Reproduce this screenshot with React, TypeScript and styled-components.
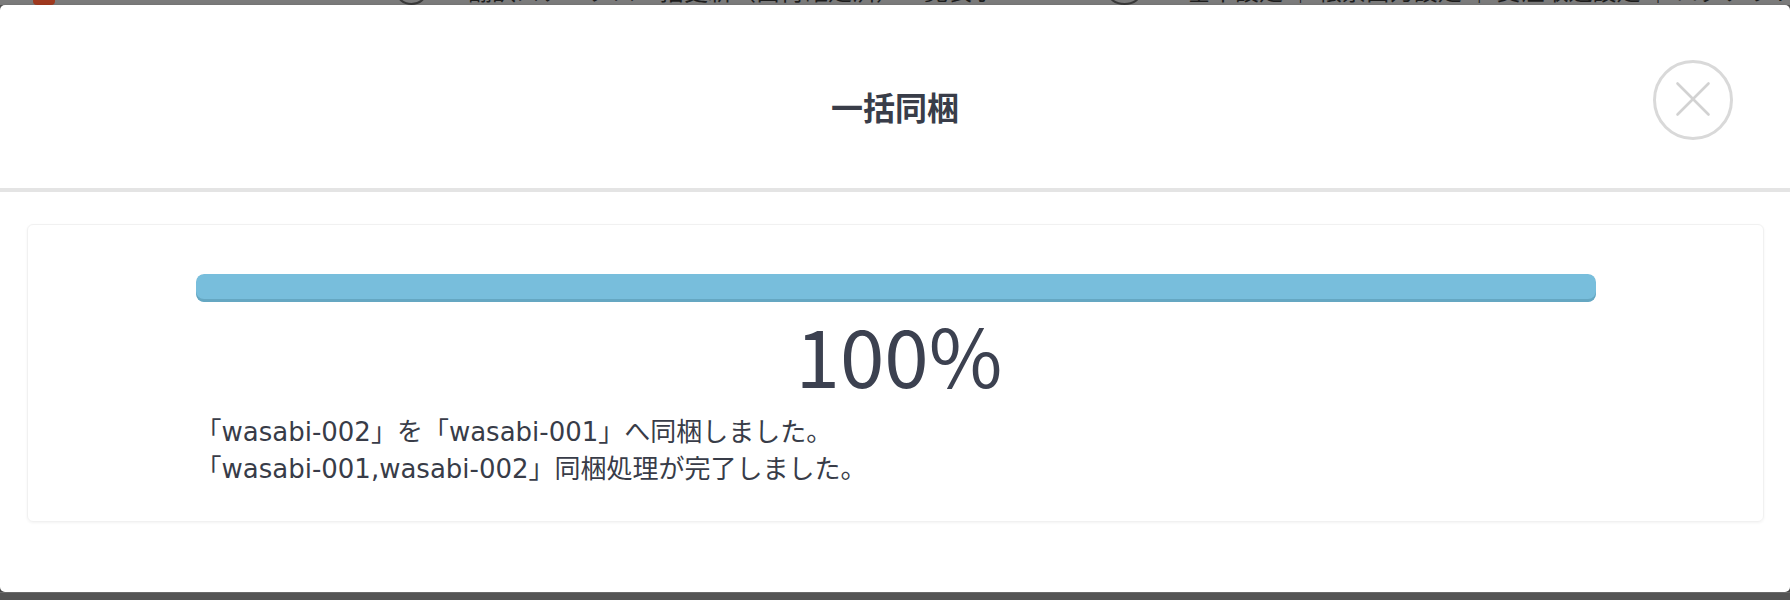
import React from "react";
import styled, { createGlobalStyle } from "styled-components";

const GlobalStyle = createGlobalStyle`
  html, body {
    margin: 0;
    padding: 0;
    background: #545454;
  }
  * { box-sizing: border-box; }
`;

const Page = styled.div`
  width: 1790px;
  height: 600px;
  display: flex;
  flex-direction: column;
  overflow: hidden;
  background: #545454;
`;

const Backdrop = styled.div`
  height: 5px;
  flex: 0 0 5px;
  background: #7b7b7b;
  overflow: hidden;
`;

const BackdropRow = styled.div`
  display: flex;
  align-items: flex-end;
  height: 30px;
  margin-top: -25px;
  font-family: "Noto Sans CJK JP", sans-serif;
  font-size: 24px;
  line-height: 30px;
  color: #1e1e1e;
  white-space: nowrap;
`;

const BackIcon = styled.span<{ $w: number; $ml: number; $c: string; $round?: boolean }>`
  flex: 0 0 auto;
  display: inline-block;
  width: ${(p) => p.$w}px;
  height: 26px;
  margin-left: ${(p) => p.$ml}px;
  background: ${(p) => p.$c};
  border: ${(p) => (p.$round ? "2px solid #3a3a3a" : "none")};
  border-radius: ${(p) => (p.$round ? "50%" : "4px")};
`;

const BackText = styled.span<{ $ml: number; $w: number }>`
  flex: 0 0 auto;
  width: ${(p) => p.$w}px;
  overflow: hidden;
  margin-left: ${(p) => p.$ml}px;
`;

const Modal = styled.div`
  flex: 0 0 587px;
  background: #ffffff;
  border-radius: 5px;
  display: flex;
  flex-direction: column;
  box-shadow: 0 2px 4px rgba(0, 0, 0, 0.35);
`;

const Header = styled.header`
  height: 187px;
  flex: 0 0 187px;
  border-bottom: 4px solid #e4e4e4;
  display: grid;
  grid-template-columns: 1fr auto 1fr;
  align-items: start;
  padding: 55px 57px 0 57px;
`;

const Title = styled.h1`
  grid-column: 2;
  margin: 22px 0 0 0;
  font-family: "Noto Sans CJK JP", sans-serif;
  font-weight: 700;
  font-size: 32px;
  line-height: 48px;
  color: #393d49;
`;

const CloseButton = styled.button`
  grid-column: 3;
  justify-self: end;
  width: 80px;
  height: 80px;
  padding: 0;
  margin: 0;
  border: none;
  background: transparent;
  cursor: pointer;
  display: block;
`;

const Body = styled.div`
  flex: 1;
  padding: 32px 26px 0 27px;
`;

const Card = styled.section`
  border: 1px solid #f1f1f1;
  border-radius: 6px;
  box-shadow: 0 1px 3px rgba(0, 0, 0, 0.05);
  padding: 49px 0 33px 0;
  display: flex;
  flex-direction: column;
  align-items: center;
`;

const Inner = styled.div`
  width: 1400px;
  display: flex;
  flex-direction: column;
`;

const Bar = styled.div`
  height: 28px;
  border-radius: 8px;
  background: #e9ecef;
  overflow: hidden;
`;

const BarFill = styled.div`
  height: 100%;
  background: #78bedc;
  box-shadow: inset 0 -3px 0 #65a7c2;
  border-radius: 8px;
`;

const Percent = styled.div`
  margin-top: 10px;
  padding-left: 7px;
  text-align: center;
  font-family: "Noto Sans CJK JP", sans-serif;
  font-weight: 400;
  font-size: 80px;
  line-height: 82px;
  color: #3c4150;
`;

const Messages = styled.div`
  margin-top: 20px;
  font-family: "DejaVu Sans", "Noto Sans CJK JP", sans-serif;
  font-size: 26px;
  line-height: 37px;
  color: #383c48;
`;

const Line = styled.div`
  white-space: nowrap;
`;

const Bottom = styled.div`
  flex: 1;
  background: #545454;
  border-top: 1px solid #6a6a6a;
`;

const CloseIcon = () => (
  <svg width="80" height="80" viewBox="0 0 80 80" aria-hidden="true">
    <circle cx="40" cy="40" r="38.5" fill="none" stroke="#d9d9d9" strokeWidth="3" />
    <line x1="24.5" y1="23.5" x2="55.5" y2="54.5" stroke="#d2d2d2" strokeWidth="2.6" strokeLinecap="round" />
    <line x1="55.5" y1="23.5" x2="24.5" y2="54.5" stroke="#d2d2d2" strokeWidth="2.6" strokeLinecap="round" />
  </svg>
);

export default function App() {
  const progress = 100;
  return (
    <>
      <GlobalStyle />
      <Page>
        <Backdrop>
          <BackdropRow>
            <BackIcon $w={22} $ml={33} $c="#a0391f" />
            <BackIcon $w={31} $ml={341} $c="transparent" $round />
            <BackText $ml={41} $w={559}>翻訳ステータス一括更新（出荷確定済）一覧表示</BackText>
            <BackIcon $w={35} $ml={80} $c="transparent" $round />
            <BackText $ml={45} $w={603}>基本設定 ｜ 帳票出力設定 ｜ 受注取込設定 ｜ ログアウト</BackText>
          </BackdropRow>
        </Backdrop>
        <Modal>
          <Header>
            <Title>一括同梱</Title>
            <CloseButton aria-label="閉じる">
              <CloseIcon />
            </CloseButton>
          </Header>
          <Body>
            <Card>
              <Inner>
                <Bar>
                  <BarFill style={{ width: `${progress}%` }} />
                </Bar>
                <Percent>{progress}%</Percent>
                <Messages>
                  <Line>「wasabi-002」を「wasabi-001」へ同梱しました。</Line>
                  <Line>「wasabi-001,wasabi-002」同梱処理が完了しました。</Line>
                </Messages>
              </Inner>
            </Card>
          </Body>
        </Modal>
        <Bottom />
      </Page>
    </>
  );
}
